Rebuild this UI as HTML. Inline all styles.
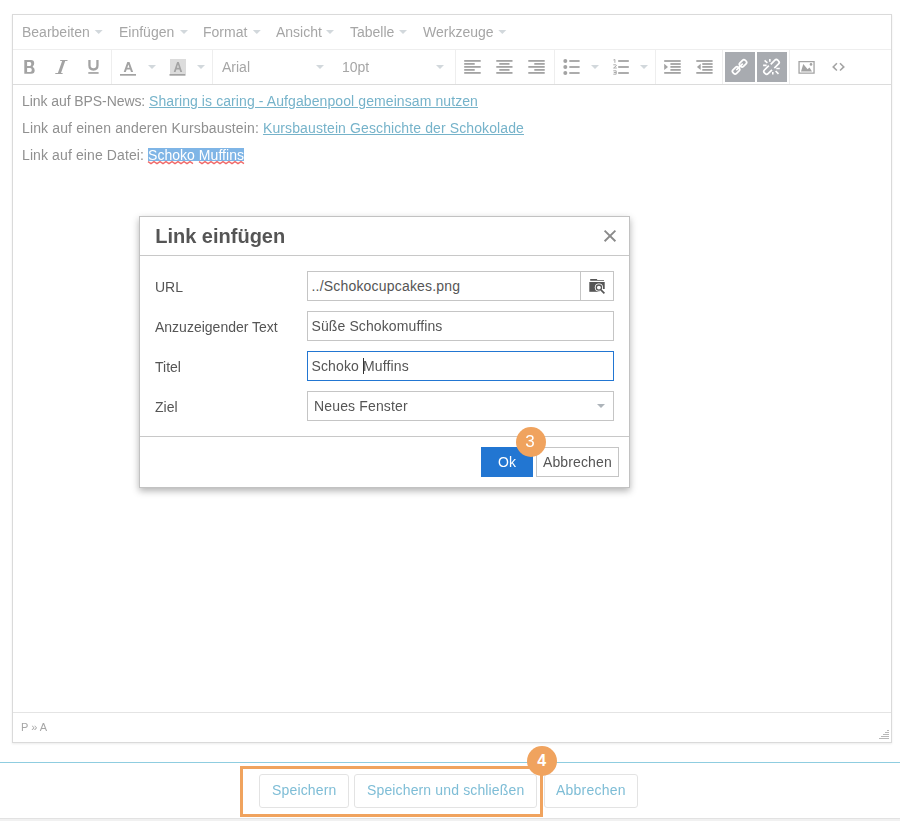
<!DOCTYPE html>
<html><head><meta charset="utf-8">
<style>
*{box-sizing:border-box;margin:0;padding:0}
html,body{width:900px;height:821px;background:#fff;overflow:hidden;font-family:"Liberation Sans",sans-serif;position:relative}
.a{position:absolute;white-space:nowrap}
.t{position:absolute;white-space:nowrap;font-size:14px;line-height:16px}
.g{will-change:transform}
.mi{color:#a6a6a6}
.lk{color:#76b3ca;text-decoration:underline}
.lbl{color:#555}
.inp{position:absolute;left:307px;width:307px;height:30px;border:1px solid #c5c5c5;background:#fff}
.bb{position:absolute;top:774px;height:34px;border:1px solid #e3e3e3;border-radius:3px;background:#fff}
.bt{color:#7ebdd6}
</style></head><body>
<!-- editor frame -->
<div class="a" style="left:12px;top:14px;width:880px;height:729px;border:1px solid #dadada;box-shadow:0 1px 2px rgba(0,0,0,0.08)"></div>
<div class="a" style="left:13px;top:49px;width:878px;height:1px;background:#eeeeee"></div>
<div class="a" style="left:13px;top:84px;width:878px;height:1px;background:#dcdcdc"></div>
<div class="a" style="left:13px;top:712px;width:878px;height:1px;background:#e4e4e4"></div>

<!-- menu -->
<div class="t mi g" style="left:22px;top:24px">Bearbeiten</div>
<div class="t mi g" style="left:119px;top:24px">Einfügen</div>
<div class="t mi g" style="left:203px;top:24px">Format</div>
<div class="t mi g" style="left:276px;top:24px">Ansicht</div>
<div class="t mi g" style="left:350px;top:24px">Tabelle</div>
<div class="t mi g" style="left:423px;top:24px">Werkzeuge</div>

<!-- toolbar separators -->
<div class="a" style="left:111px;top:50px;width:1px;height:34px;background:#eeeeee"></div>
<div class="a" style="left:212px;top:50px;width:1px;height:34px;background:#eeeeee"></div>
<div class="a" style="left:455px;top:50px;width:1px;height:34px;background:#eeeeee"></div>
<div class="a" style="left:554px;top:50px;width:1px;height:34px;background:#eeeeee"></div>
<div class="a" style="left:655px;top:50px;width:1px;height:34px;background:#eeeeee"></div>
<div class="a" style="left:722px;top:50px;width:1px;height:34px;background:#eeeeee"></div>
<div class="a" style="left:789px;top:50px;width:1px;height:34px;background:#eeeeee"></div>
<div class="a" style="left:725px;top:52px;width:30px;height:30px;background:#a8abb0"></div>
<div class="a" style="left:757px;top:52px;width:30px;height:30px;background:#a8abb0"></div>
<div class="a" style="left:170px;top:59px;width:16px;height:15px;background:#dcdcdc"></div>
<div class="t mi g" style="left:222px;top:59px">Arial</div>
<div class="t mi g" style="left:342px;top:59px">10pt</div>

<svg class="a" style="left:0;top:0" width="900" height="821" viewBox="0 0 900 821">
  <g fill="#d2d8dc">
    <path d="M94.7,30 h8 l-4,4 z"/>
    <path d="M180,30 h8 l-4,4 z"/>
    <path d="M252.8,30 h8 l-4,4 z"/>
    <path d="M326,30 h8 l-4,4 z"/>
    <path d="M399,30 h8 l-4,4 z"/>
    <path d="M498.3,30 h8 l-4,4 z"/>
    <path d="M148,65 h8 l-4,4 z"/>
    <path d="M197,65 h8 l-4,4 z"/>
    <path d="M316,65 h8 l-4,4 z"/>
    <path d="M436,65 h8 l-4,4 z"/>
    <path d="M591,65 h8 l-4,4 z"/>
    <path d="M640,65 h8 l-4,4 z"/>
  </g>
  <g fill="#a3a3a3">
    <!-- B -->
    <path fill-rule="evenodd" d="M24.3,60 H31 Q34.2,60 34.2,63.3 Q34.2,65.6 32.6,66.8 Q34.7,67.8 34.7,70.3 Q34.7,73.8 31.2,73.8 H24.3 Z M27.1,61.9 H29.8 Q31.3,61.9 31.3,63.9 Q31.3,66 29.8,66 H27.1 Z M27.1,68 H30.2 Q31.8,68 31.8,70 Q31.8,72 30.2,72 H27.1 Z"/>
    <!-- I -->
    <path d="M60.3,60 H67.6 L67.4,61 H65.2 L61,72.9 H62.7 L62.5,73.9 H55.2 L55.4,72.9 H57.9 L62.1,61 H60.1 Z"/>
    <!-- U -->
    <path d="M89.45,60 V65.6 Q89.45,69.5 93.45,69.5 Q97.45,69.5 97.45,65.6 V60" fill="none" stroke="#a3a3a3" stroke-width="2.3"/>
    <rect x="88.3" y="72.1" width="10.3" height="1.7"/>
    <!-- text color A -->
    <path d="M123.7,72 L127.3,62 H129.5 L133.1,72 H131 L130.1,69.5 H126.7 L125.8,72 Z M127.3,67.8 H129.5 L128.4,64.6 Z" fill-rule="evenodd"/>
    <rect x="120" y="74" width="16" height="1.7"/>
    <!-- bg color A -->
    <path d="M173.7,72 L177.1,62 H178.8 L182.2,72 H180.3 L179.5,69.5 H176.4 L175.6,72 Z M176.9,67.8 H179 L177.95,64.6 Z" fill-rule="evenodd"/>
    <rect x="169.5" y="74" width="16" height="1.7"/>
    <!-- align left -->
    <rect x="464.2" y="60" width="16.5" height="1.8"/><rect x="464.2" y="63" width="10.5" height="1.8"/><rect x="464.2" y="66" width="16.5" height="1.8"/><rect x="464.2" y="69" width="10.5" height="1.8"/><rect x="464.2" y="72" width="16.5" height="1.8"/>
    <!-- align center -->
    <rect x="496.3" y="60" width="16.2" height="1.8"/><rect x="499.3" y="63" width="10.2" height="1.8"/><rect x="496.3" y="66" width="16.2" height="1.8"/><rect x="499.3" y="69" width="10.2" height="1.8"/><rect x="496.3" y="72" width="16.2" height="1.8"/>
    <!-- align right -->
    <rect x="528.3" y="60" width="16.4" height="1.8"/><rect x="534.3" y="63" width="10.4" height="1.8"/><rect x="528.3" y="66" width="16.4" height="1.8"/><rect x="534.3" y="69" width="10.4" height="1.8"/><rect x="528.3" y="72" width="16.4" height="1.8"/>
    <!-- bullet list -->
    <circle cx="565.3" cy="61" r="2"/><circle cx="565.3" cy="67" r="2"/><circle cx="565.3" cy="73" r="2"/>
    <rect x="569.3" y="60.1" width="10.3" height="1.8"/><rect x="569.3" y="66.1" width="10.3" height="1.8"/><rect x="569.3" y="72.1" width="10.3" height="1.8"/>
    <!-- numbered list -->
    <rect x="618.2" y="60.1" width="10.6" height="1.8"/><rect x="618.2" y="66.1" width="10.6" height="1.8"/><rect x="618.2" y="72.1" width="10.6" height="1.8"/>
    <!-- indent -->
    <rect x="664.2" y="60.1" width="16.5" height="1.8"/><rect x="670.4" y="63.1" width="10.3" height="1.8"/><rect x="670.4" y="66" width="10.3" height="1.8"/><rect x="670.4" y="69" width="10.3" height="1.8"/><rect x="664.2" y="72" width="16.5" height="1.8"/>
    <path d="M664.2,63.8 L668,66.9 L664.2,70 Z"/>
    <!-- outdent -->
    <rect x="696.3" y="60.1" width="16.3" height="1.8"/><rect x="702.3" y="63.1" width="10.3" height="1.8"/><rect x="702.3" y="66" width="10.3" height="1.8"/><rect x="702.3" y="69" width="10.3" height="1.8"/><rect x="696.3" y="72" width="16.3" height="1.8"/>
    <path d="M700.7,63.8 L696.9,66.9 L700.7,70 Z"/>
    <!-- image -->
    <path fill-rule="evenodd" d="M798.4,61 H814.7 V73.7 H798.4 Z M799.7,62.2 V72.6 H813.4 V62.2 Z"/>
    <path d="M801,71.4 L803.3,64 L807.6,69.2 L809.5,67.6 L812,71.4 Z"/>
    <circle cx="811" cy="64.4" r="1.3"/>
  </g>
  <g stroke="#a3a3a3" stroke-width="1.55" fill="none">
    <path d="M836.9,63.3 L833.2,66.9 L836.9,70.5"/>
    <path d="M840,63.3 L843.8,66.9 L840,70.5"/>
  </g>
  <g stroke="#a8a8a8" stroke-width="0.95" fill="none">
    <path d="M613.4,60 L614.9,59.5 V62.8"/>
    <path d="M613.3,64.8 H615.8 Q616.5,64.9 616.3,65.8 L613.6,68 H616.8"/>
    <path d="M613.3,70.8 H616.2 V74.2 H613.3 M613.8,72.5 H616.2"/>
  </g>
  <!-- link icons -->
  <g stroke="#fff" stroke-width="1.7" fill="none">
    <rect x="-3.8" y="-2.5" width="7.6" height="5" rx="2" transform="translate(743,63.35) rotate(-45)"/>
    <rect x="-3.8" y="-2.5" width="7.6" height="5" rx="2" transform="translate(736.05,70.35) rotate(-45)"/>
    <path d="M736.3,70.1 L742.8,63.6"/>
  </g>
  <g stroke="#fff" stroke-width="1.7" fill="none">
    <path transform="translate(775.4,63.4) rotate(-45)" d="M-4,-2.6 H1.9 Q3.9,-2.6 3.9,-0.6 V0.6 Q3.9,2.6 1.9,2.6 H-4.1"/>
    <path transform="translate(767.6,70.5) rotate(-45)" d="M4.3,-2.6 H-1.9 Q-3.9,-2.6 -3.9,-0.6 V0.6 Q-3.9,2.6 -1.9,2.6 H3.6"/>
    <path d="M764.6,60.4 L767.4,62.8 M769.85,59 V61.8 M763.1,65.4 H766.6 M776.3,68.5 H779.8 M775.6,71 L778.5,73.8 M772.8,72.1 V74.6" stroke-width="1.6"/>
  </g>
</svg>

<!-- content -->
<div class="t g" style="left:22px;top:93px;color:#909090"><span style="letter-spacing:-0.073px">Link auf BPS-News: </span><span class="lk" style="letter-spacing:0.091px">Sharing is caring - Aufgabenpool gemeinsam nutzen</span></div>
<div class="t g" style="left:22px;top:120px;color:#909090"><span style="letter-spacing:0.139px">Link auf einen anderen Kursbaustein: </span><span class="lk" style="letter-spacing:0.11px">Kursbaustein Geschichte der Schokolade</span></div>
<div class="t g" style="left:22px;top:147px;color:#909090;letter-spacing:0.107px">Link auf eine Datei: </div>
<div class="a" style="left:148px;top:148px;width:96px;height:13px;background:#7fb5e6"></div>
<div class="t g" style="left:148px;top:147px;color:#fff;letter-spacing:0.038px">Schoko Muffins</div>
<svg class="a" style="left:140px;top:155px" width="120" height="14" viewBox="140 155 120 14"><polyline points="148,161.6 151,163.6 154,161.6 157,163.6 160,161.6 163,163.6 166,161.6 169,163.6 172,161.6 175,163.6 178,161.6 181,163.6 184,161.6 187,163.6 190,161.6 193,163.6" fill="none" stroke="#f06a6a" stroke-width="1.3"/><polyline points="199,161.6 202,163.6 205,161.6 208,163.6 211,161.6 214,163.6 217,161.6 220,163.6 223,161.6 226,163.6 229,161.6 232,163.6 235,161.6 238,163.6 241,161.6 244,163.6" fill="none" stroke="#f06a6a" stroke-width="1.3"/></svg>

<!-- status -->
<div class="a g" style="left:21px;top:721px;font-size:11px;line-height:13px;color:#a6a6a6">P » A</div>
<svg class="a" style="left:870px;top:725px" width="22" height="16" viewBox="870 725 22 16">
  <g fill="#b8b8b8"><rect x="887" y="730" width="2" height="1"/><rect x="885" y="732" width="4" height="1"/><rect x="883" y="734" width="6" height="1"/><rect x="881" y="736" width="8" height="1"/><rect x="879" y="738" width="10" height="1"/></g>
</svg>

<!-- dialog -->
<div class="a" style="left:139px;top:216px;width:491px;height:272px;border:1px solid #c2c2c2;background:#fff;box-shadow:0 3px 7px rgba(0,0,0,0.3)"></div>
<div class="a" style="left:140px;top:255px;width:489px;height:1px;background:#c8c8c8"></div>
<div class="a" style="left:140px;top:436px;width:489px;height:1px;background:#c8c8c8"></div>
<div class="a" style="left:155.2px;top:225px;font-size:20px;font-weight:bold;line-height:22px;color:#555">Link einfügen</div>
<svg class="a" style="left:600px;top:226px" width="20" height="20" viewBox="600 226 20 20">
  <path d="M604.6,230.6 L615.4,241.2 M615.4,230.6 L604.6,241.2" stroke="#8a8a8a" stroke-width="1.9"/>
</svg>
<div class="t lbl" style="left:155px;top:279px">URL</div>
<div class="t lbl" style="left:155px;top:319px">Anzuzeigender Text</div>
<div class="t lbl" style="left:155px;top:359px">Titel</div>
<div class="t lbl" style="left:155px;top:399px">Ziel</div>
<div class="inp" style="top:271px"></div>
<div class="a" style="left:580px;top:272px;width:1px;height:28px;background:#c5c5c5"></div>
<div class="inp" style="top:311px"></div>
<div class="inp" style="top:351px;border-color:#2276d2"></div>
<div class="inp" style="top:391px"></div>
<div class="t lbl" style="left:311.5px;top:278px;letter-spacing:0.19px">../Schokocupcakes.png</div>
<div class="t lbl" style="left:311.5px;top:318px;letter-spacing:0.11px">Süße Schokomuffins</div>
<div class="t lbl" style="left:311.5px;top:358px;letter-spacing:0.14px">Schoko Muffins</div>
<div class="a" style="left:363px;top:358px;width:1px;height:16px;background:#333"></div>
<div class="t lbl" style="left:314px;top:398px;letter-spacing:0.15px">Neues Fenster</div>
<svg class="a" style="left:580px;top:271px" width="40" height="160" viewBox="580 271 40 160">
  <g fill="#555">
    <path d="M590.2,279 H596.8 L597.4,279.9 H604 V280.7 H590.2 Z"/>
    <rect x="589.3" y="282" width="15.4" height="9.8"/>
  </g>
  <circle cx="598.9" cy="287.6" r="4.1" fill="#fff"/>
  <path d="M600.5,289.4 L605,293.9" stroke="#fff" stroke-width="4.2"/><rect x="603" y="289" width="2" height="3" fill="#fff"/>
  <circle cx="598.9" cy="287.6" r="2.6" fill="#fff" stroke="#555" stroke-width="1.3"/>
  <path d="M600.9,289.8 L604.4,293.3" stroke="#555" stroke-width="1.7"/>
  <path d="M597,404 h8 l-4,4 z" fill="#adb4ba"/>
</svg>

<!-- buttons -->
<div class="a" style="left:481px;top:447px;width:52px;height:30px;background:#2276d2"></div>
<div class="t" style="left:498px;top:454px;color:#fff">Ok</div>
<div class="a" style="left:536px;top:447px;width:83px;height:30px;border:1px solid #c5c5c5;background:#fff"></div>
<div class="t" style="left:543px;top:454px;color:#555;letter-spacing:0.12px">Abbrechen</div>
<div class="a" style="left:515.6px;top:426.6px;width:30px;height:30px;border-radius:50%;background:#f0a35e"></div>
<div class="a" style="left:515px;top:432px;width:30px;text-align:center;font-size:17px;line-height:20px;color:#fff">3</div>

<!-- bottom area -->
<div class="a" style="left:0;top:762px;width:900px;height:1px;background:#8fcde0"></div>
<div class="a" style="left:0;top:818px;width:900px;height:1px;background:#e2e2e2"></div><div class="a" style="left:0;top:819px;width:900px;height:2px;background:#f1f1f1"></div>
<div class="bb" style="left:259px;width:90px"></div>
<div class="bb" style="left:354px;width:183px"></div>
<div class="bb" style="left:544px;width:94px"></div>
<div class="t bt g" style="left:271.5px;top:782px;letter-spacing:0.155px">Speichern</div>
<div class="t bt g" style="left:366.8px;top:782px;letter-spacing:0.14px">Speichern und schließen</div>
<div class="t bt g" style="left:556px;top:782px;letter-spacing:0.22px">Abbrechen</div>
<div class="a" style="left:240px;top:766px;width:303px;height:51px;border:3px solid #f0a35e"></div>
<div class="a" style="left:526.6px;top:745.8px;width:30px;height:30px;border-radius:50%;background:#f0a35e"></div>
<div class="a" style="left:526.6px;top:751px;width:30px;text-align:center;font-size:16px;font-weight:bold;line-height:20px;color:#fff">4</div>
</body></html>
